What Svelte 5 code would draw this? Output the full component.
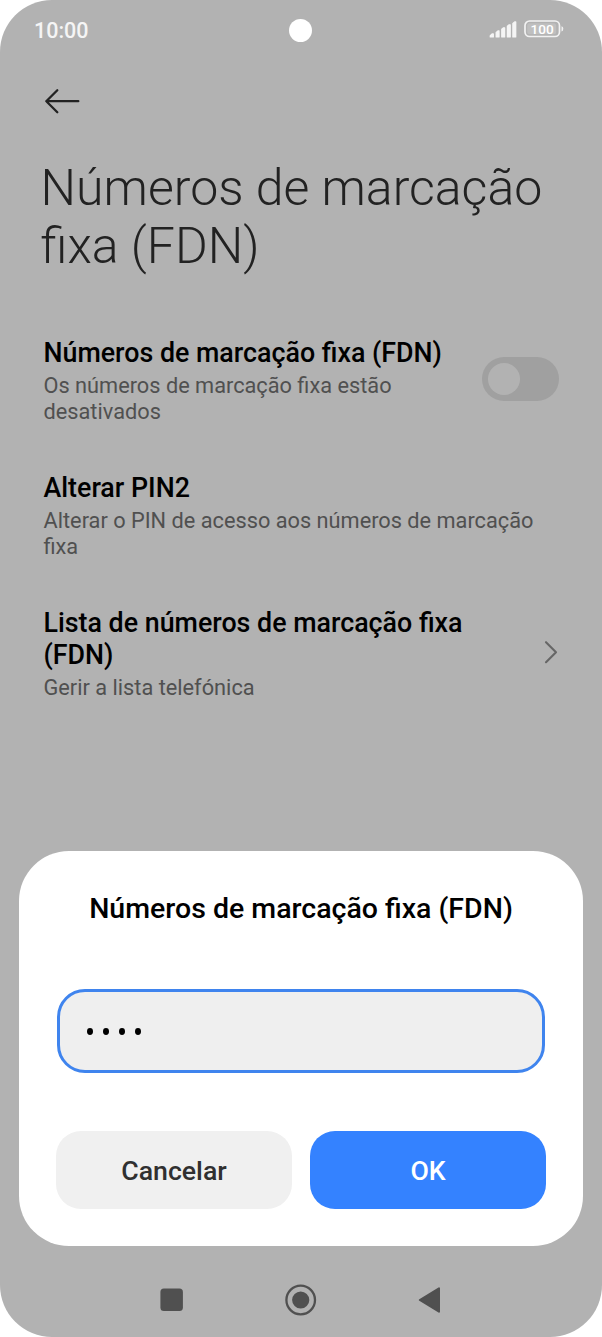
<script>
  const items = [
    { title: ['Números de marcação fixa (FDN)'], note: ['Os números de marcação fixa estão', 'desativados'], kind: 'toggle' },
    { title: ['Alterar PIN2'], note: ['Alterar o PIN de acesso aos números de marcação', 'fixa'], kind: 'plain' },
    { title: ['Lista de números de marcação fixa', '(FDN)'], note: ['Gerir a lista telefónica'], kind: 'link' }
  ];
</script>

<div class="phone">
  <header class="status">
    <span class="time">10:00</span>
    <span class="camera"></span>
    <svg class="indicators" width="76" height="20" viewBox="0 0 76 20">
      <g fill="#f5f5f5" stroke="#f5f5f5" stroke-width="1.300" stroke-linejoin="round">
        <path d="M1.300 16.900v-1.200l1.800-1.700h1.200v2.900z" />
        <path d="M7.200 16.900v-4.500l1.800-1.500h1v6z" />
        <path d="M12.800 16.900V9.300l1.800-1.500h1v9.100z" />
        <path d="M18.400 16.900V6.300l1.800-1.500h1v12.100z" />
        <path d="M23.900 16.900V3.500L25.700 2h1v14.900z" />
      </g>
      <rect x="36" y="1" width="34.500" height="15.500" rx="4.500" fill="none" stroke="#f2f2f2" stroke-width="1.700" />
      <rect x="38.200" y="3.200" width="29" height="11.100" rx="2.500" fill="#bfbfbf" />
      <path d="M72.500 6.200q1.800 0 1.800 2.600t-1.800 2.600z" fill="#f0f0f0" />
      <text x="53.200" y="13.700" text-anchor="middle">100</text>
    </svg>
  </header>
  <svg class="back" width="36" height="26" viewBox="0 0 36 26"><path d="M13.300 2.200L2.300 13.200l11 11M2.300 13.200h32" fill="none" stroke="#222" stroke-width="2.300" stroke-linecap="round" stroke-linejoin="round" /></svg>
  <h1><span>Números de marcação</span><span>fixa (FDN)</span></h1>
  <main>
    {#each items as item}
      <section>
        <div class="copy">
          <h2>{#each item.title as line}<span>{line}</span>{/each}</h2>
          <p>{#each item.note as line}<span>{line}</span>{/each}</p>
        </div>
        {#if item.kind === 'toggle'}
          <div class="toggle"><i></i></div>
        {:else if item.kind === 'link'}
          <svg class="chevron" width="14" height="24" viewBox="0 0 14 24"><path d="M2 2.200l10 10-10 10" fill="none" stroke="#666" stroke-width="2.100" stroke-linecap="round" stroke-linejoin="round" /></svg>
        {/if}
      </section>
    {/each}
  </main>
  <div class="dialog">
    <h3>Números de marcação fixa (FDN)</h3>
    <div class="field"><i></i><i></i><i></i><i></i></div>
    <div class="actions"><button>Cancelar</button><button class="primary">OK</button></div>
  </div>
  <nav>
    <svg width="24" height="24" viewBox="0 0 24 24"><rect x="0.400" y="0.600" width="22.500" height="22.500" rx="3.500" /></svg>
    <svg width="32" height="32" viewBox="0 0 32 32"><circle cx="15.700" cy="16" r="14.300" fill="none" stroke="#505050" stroke-width="2.300" /><circle cx="15.700" cy="16" r="8.600" /></svg>
    <svg width="24" height="28" viewBox="0 0 24 28"><path d="M22 2.300v23.400L2.800 14z" stroke="#505050" stroke-width="2" stroke-linejoin="round" /></svg>
  </nav>
</div>

<style>
  :global(body) { margin: 0; background: #fff; }
  .phone { width: 602px; height: 1337px; box-sizing: border-box; overflow: hidden; display: flex; flex-direction: column; background: #b2b2b2; border-radius: 52px; font-family: Roboto, sans-serif; color: #000; }
  h1, h2, h3, p { margin: 0; font-weight: 500; white-space: nowrap; }
  h1 span, h2 span, p span { display: block; width: max-content; }
  .status { height: 60px; flex: none; box-sizing: border-box; display: grid; grid-template-columns: 255px 24px 1fr; align-items: center; padding: 0 37px 0 34px; color: #f5f5f5; }
  .time { font-size: 21.500px; font-weight: 500; }
  .camera { width: 23px; height: 23px; border-radius: 50%; background: #fff; }
  .indicators { justify-self: end; }
  .indicators text { font: 500 13.600px Roboto, sans-serif; fill: #fff; }
  .back { flex: none; margin: 28px 0 0 44px; }
  h1 { height: 116px; flex: none; margin: 45px 0 0 40.600px; font-size: 50px; line-height: 58px; font-weight: 300; color: #222; }
  main { flex: none; padding: 62px 43.500px 0; display: flex; flex-direction: column; gap: 47px; }
  section { display: flex; justify-content: space-between; align-items: center; }
  h2 { font-size: 26.800px; line-height: 32px; }
  p { margin-top: 4px; font-size: 21.750px; line-height: 26px; font-weight: 400; color: #505050; }
  .toggle { width: 77px; height: 44px; margin-bottom: 4px; border-radius: 22px; background: #a0a0a0; box-sizing: border-box; padding: 6px; }
  .toggle i { display: block; width: 32px; height: 32px; border-radius: 50%; background: #b2b2b2; }
  .chevron { margin: 0 0.500px 4px 0; }
  .dialog { flex: none; width: 564px; height: 395px; margin: auto auto 0; box-sizing: border-box; padding: 40px 37px 37px; display: flex; flex-direction: column; background: #fff; border-radius: 50px; }
  h3 { font-size: 28.500px; line-height: 36px; text-align: center; }
  .field { height: 84px; box-sizing: border-box; margin: 62px 1px 0; border: 3px solid #3f84ee; border-radius: 28px; background: #efefef; display: flex; gap: 10px; align-items: center; padding-left: 26.500px; }
  .field i { width: 6.200px; height: 7px; border-radius: 50%; background: #000; }
  .actions { display: grid; grid-template-columns: 1fr 1fr; gap: 18px; margin-top: 58px; }
  button { height: 78px; padding: 2px 0 0; border: 0; border-radius: 25px; background: #f0f0f0; color: #303030; font: 500 26.700px Roboto, sans-serif; }
  .primary { background: #3482ff; color: #fff; }
  nav { flex: none; height: 91px; display: flex; justify-content: space-between; align-items: center; padding: 16px 161px 0 160px; box-sizing: border-box; fill: #505050; }
</style>
